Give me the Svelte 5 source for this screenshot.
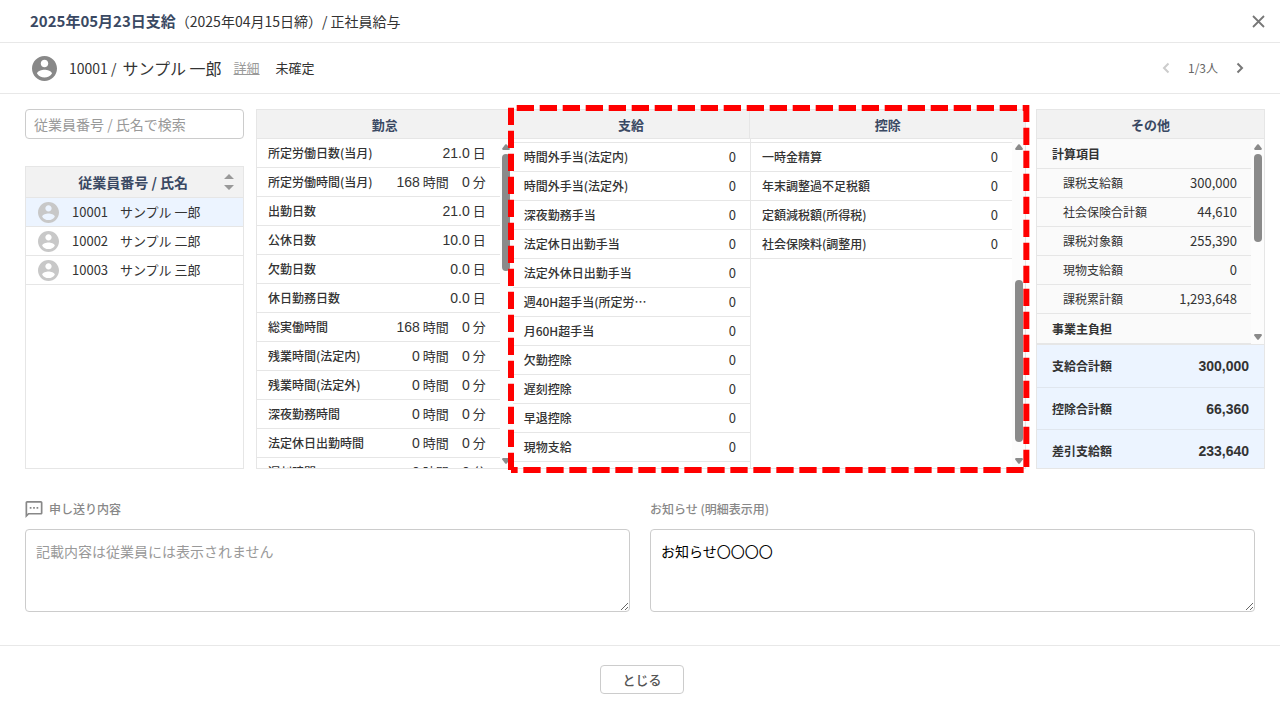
<script lang="ts">
	let keyword = $state('');
	let selected = $state('10001');
	let handover = $state('');
	let notice = $state('お知らせ〇〇〇〇');

	const employees = [
		{ id: '10001', name: 'サンプル 一郎' },
		{ id: '10002', name: 'サンプル 二郎' },
		{ id: '10003', name: 'サンプル 三郎' }
	];

	const attendance = [
		{ label: '所定労働日数(当月)', days: '21.0' },
		{ label: '所定労働時間(当月)', hours: 168, minutes: 0 },
		{ label: '出勤日数', days: '21.0' },
		{ label: '公休日数', days: '10.0' },
		{ label: '欠勤日数', days: '0.0' },
		{ label: '休日勤務日数', days: '0.0' },
		{ label: '総実働時間', hours: 168, minutes: 0 },
		{ label: '残業時間(法定内)', hours: 0, minutes: 0 },
		{ label: '残業時間(法定外)', hours: 0, minutes: 0 },
		{ label: '深夜勤務時間', hours: 0, minutes: 0 },
		{ label: '法定休日出勤時間', hours: 0, minutes: 0 },
		{ label: '遅刻時間', hours: 0, minutes: 0 }
	];

	const payments = [
		'時間外手当(法定内)',
		'時間外手当(法定外)',
		'深夜勤務手当',
		'法定休日出勤手当',
		'法定外休日出勤手当',
		'週40H超手当(所定労…',
		'月60H超手当',
		'欠勤控除',
		'遅刻控除',
		'早退控除',
		'現物支給'
	];

	const deductions = ['一時金精算', '年末調整過不足税額', '定額減税額(所得税)', '社会保険料(調整用)'];

	const calcItems = [
		{ label: '課税支給額', value: 300000 },
		{ label: '社会保険合計額', value: 44610 },
		{ label: '課税対象額', value: 255390 },
		{ label: '現物支給額', value: 0 },
		{ label: '課税累計額', value: 1293648 }
	];

	const totals = [
		{ label: '支給合計額', value: 300000 },
		{ label: '控除合計額', value: 66360 },
		{ label: '差引支給額', value: 233640 }
	];

	const fmt = (n: number) => n.toLocaleString('en-US');
</script>

{#snippet avatar()}
	<svg class="avatar" viewBox="2 2 20 20" aria-hidden="true">
		<path d="M12 2C6.48 2 2 6.48 2 12s4.48 10 10 10 10-4.48 10-10S17.52 2 12 2zm0 3c1.66 0 3 1.34 3 3s-1.34 3-3 3-3-1.34-3-3 1.34-3 3-3zm0 14.2c-2.5 0-4.71-1.28-6-3.22.03-1.99 4-3.08 6-3.08 1.99 0 5.97 1.09 6 3.08-1.29 1.94-3.5 3.22-6 3.22z" />
	</svg>
{/snippet}

{#snippet scrollbar(top: number, size: number)}
	<div class="scrollbar" aria-hidden="true">
		<svg viewBox="0 0 8 6"><path d="M3.2 .6Q4 0 4.8 .6L7.8 4.6Q8 6 7 6H1Q0 6 .2 4.6z" /></svg>
		<div class="track">
			<div class="thumb" style="top: {top}%; height: {size}%"></div>
		</div>
		<svg viewBox="0 0 8 6"><path d="M3.2 5.4Q4 6 4.8 5.4L7.8 1.4Q8 0 7 0H1Q0 0 .2 1.4z" /></svg>
	</div>
{/snippet}

<div class="dialog" lang="ja">
	<header class="title-bar">
		<h1>2025年05月23日支給</h1>
		<span class="subtitle">（2025年04月15日締）/ 正社員給与</span>
		<button class="icon-btn close" aria-label="閉じる">
			<svg viewBox="0 0 13 13"><path d="M1 1l11 11M12 1L1 12" /></svg>
		</button>
	</header>

	<div class="person-bar">
		{@render avatar()}
		<span class="person-id">10001 /</span>
		<span class="person-name">サンプル 一郎</span>
		<a href="#detail">詳細</a>
		<span>未確定</span>
		<nav class="pager">
			<button class="icon-btn" aria-label="前へ" disabled>
				<svg viewBox="0 0 8 12"><path d="M6.5 1.5L2 6l4.500 4.500" /></svg>
			</button>
			<span>1/3人</span>
			<button class="icon-btn" aria-label="次へ">
				<svg viewBox="0 0 8 12"><path d="M1.500 1.500L6 6l-4.500 4.500" /></svg>
			</button>
		</nav>
	</div>

	<main>
		<aside>
			<input type="text" aria-label="従業員検索" placeholder="従業員番号 / 氏名で検索" bind:value={keyword} />
			<div class="employees">
				<table>
					<thead>
						<tr>
							<th colspan="3">
								<div class="sort-head">
									従業員番号 / 氏名
									<svg viewBox="0 0 10 18" aria-hidden="true"><path d="M0 6l5-5 5 5zM0 12h10l-5 5z" /></svg>
								</div>
							</th>
						</tr>
					</thead>
					<tbody>
						{#each employees as emp}
							<tr class:selected={emp.id === selected} onclick={() => (selected = emp.id)}>
								<td class="face">{@render avatar()}</td>
								<td class="id">{emp.id}</td>
								<td>{emp.name}</td>
							</tr>
						{/each}
					</tbody>
				</table>
			</div>
		</aside>

		<div class="ledger">
			<section class="panel attendance">
				<h2>勤怠</h2>
				<div class="body">
					<table>
						<tbody>
							{#each attendance as row}
								<tr>
									<th scope="row">{row.label}</th>
									<td>
										{#if row.days}
											<b>{row.days}</b> 日
										{:else}
											<b>{row.hours}</b> 時間<span class="minutes"><b>{row.minutes}</b> 分</span>
										{/if}
									</td>
								</tr>
							{/each}
						</tbody>
					</table>
					{@render scrollbar(0, 39)}
				</div>
			</section>

			<div class="panel pay">
				<div class="pay-heads">
					<h2 id="pay-head">支給</h2>
					<h2 id="deduct-head">控除</h2>
				</div>
				<div class="body">
					<div class="list payments">
						<table aria-labelledby="pay-head">
							<tbody>
								{#each payments as label}
									<tr><th scope="row">{label}</th><td>0</td></tr>
								{/each}
							</tbody>
						</table>
					</div>
					<div class="list deductions">
						<table aria-labelledby="deduct-head">
							<tbody>
								{#each deductions as label}
									<tr><th scope="row">{label}</th><td>0</td></tr>
								{/each}
							</tbody>
						</table>
					</div>
					{@render scrollbar(42, 54)}
				</div>
				<svg class="marker" aria-hidden="true">
					<line x1="0" y1="100%" x2="0" y2="-3" />
					<line x1="0" y1="0" x2="100%" y2="0" stroke-dashoffset="17.3" />
					<line x1="100%" y1="-3" x2="100%" y2="100%" stroke-dashoffset="0.3" />
					<line x1="100%" y1="100%" x2="0" y2="100%" stroke-dashoffset="20.3" />
				</svg>
			</div>
		</div>

		<section class="panel other">
			<h2>その他</h2>
			<div class="body">
				<table>
					<tbody>
						<tr class="group"><th colspan="2">計算項目</th></tr>
						{#each calcItems as item}
							<tr><th scope="row">{item.label}</th><td>{fmt(item.value)}</td></tr>
						{/each}
						<tr class="group"><th colspan="2">事業主負担</th></tr>
					</tbody>
				</table>
				{@render scrollbar(0, 50)}
			</div>
			<dl class="totals">
				{#each totals as total}
					<div>
						<dt>{total.label}</dt>
						<dd>{fmt(total.value)}</dd>
					</div>
				{/each}
			</dl>
		</section>
	</main>

	<div class="notes">
		<div class="note">
			<label for="handover">
				<svg viewBox="2 2 20 20" aria-hidden="true">
					<path d="M20 2H4c-1.100 0-2 .9-2 2v18l4-4h14c1.100 0 2-.9 2-2V4c0-1.100-.9-2-2-2zm0 14H5.200L4 17.200V4h16v12zM7 9h2v2H7zm4 0h2v2h-2zm4 0h2v2h-2z" />
				</svg>
				申し送り内容
			</label>
			<textarea id="handover" placeholder="記載内容は従業員には表示されません" bind:value={handover}></textarea>
		</div>
		<div class="note">
			<label for="notice">お知らせ (明細表示用)</label>
			<textarea id="notice" bind:value={notice}></textarea>
		</div>
	</div>

	<footer>
		<button class="close-btn">とじる</button>
	</footer>
</div>

<style>
	:global(body) {
		background: #fff;
	}

	.dialog,
	.dialog * {
		box-sizing: border-box;
	}

	.dialog {
		font-family: 'Noto Sans CJK JP', sans-serif;
		font-size: 13px;
		line-height: 20px;
		color: #333;
		overflow: hidden;
	}

	h1,
	h2,
	dl,
	dd {
		margin: 0;
	}

	button,
	input,
	textarea {
		font-family: inherit;
	}

	table {
		width: 100%;
		border-spacing: 0;
	}

	th,
	td {
		height: 29px;
		padding: 0;
		border-bottom: 1px solid #e6e6e6;
		white-space: nowrap;
	}

	.title-bar {
		display: flex;
		align-items: center;
		height: 43px;
		padding: 0 15px 0 30px;
		border-bottom: 1px solid #e8e8e8;
	}

	h1 {
		font-size: 15px;
		font-weight: 700;
		color: #3a4963;
	}

	.subtitle {
		font-size: 14px;
	}

	.icon-btn {
		display: flex;
		padding: 0;
		border: none;
		background: none;
		cursor: pointer;
	}

	.icon-btn svg {
		width: 8px;
		height: 12px;
		fill: none;
		stroke: #777;
		stroke-width: 2;
	}

	.icon-btn:disabled svg {
		stroke: #ccc;
	}

	.close {
		margin-left: auto;
	}

	.close svg {
		width: 13px;
		height: 13px;
		stroke-width: 1.8;
	}

	.person-bar {
		display: flex;
		align-items: center;
		height: 51px;
		padding: 0 36px 0 32px;
		border-bottom: 1px solid #e8e8e8;
	}

	.avatar {
		display: block;
		width: 21px;
		height: 21px;
		fill: #c8c8c8;
	}

	.person-bar .avatar {
		width: 25px;
		height: 25px;
		margin-right: 12px;
		fill: #888;
	}

	.person-name {
		margin-left: 6px;
		font-size: 16px;
	}

	.person-id {
		font-size: 14px;
	}

	.person-bar a {
		margin: 0 16px 0 12px;
		color: #999;
	}

	.pager {
		display: flex;
		align-items: center;
		gap: 18px;
		margin-left: auto;
		font-size: 12px;
		color: #666;
	}

	main {
		display: flex;
		height: 375px;
		padding: 15px 15px 0 25px;
	}

	aside {
		display: flex;
		flex-direction: column;
		width: 219px;
		margin-right: 12px;
	}

	input {
		height: 30px;
		padding: 0 8px;
		border: 1px solid #ccc;
		border-radius: 4px;
		font-size: 14px;
		color: #333;
	}

	input::placeholder,
	textarea::placeholder {
		color: #999;
	}

	.employees {
		flex: 1;
		margin-top: 27px;
		border: 1px solid #e6e6e6;
	}

	.employees thead th {
		height: 31px;
		background: #f2f2f2;
		font-size: 14px;
		color: #3a4963;
	}

	.sort-head {
		display: flex;
		align-items: center;
		justify-content: flex-end;
		gap: 36px;
		padding-right: 9px;
	}

	.sort-head svg {
		width: 10px;
		height: 18px;
		fill: #999;
	}

	.employees tbody tr {
		cursor: pointer;
	}

	.employees .face {
		width: 46px;
		padding-left: 12px;
	}

	.employees .id {
		width: 48px;
	}

	.selected td {
		background: #ecf4ff;
	}

	.ledger {
		display: grid;
		grid-template-columns: 1fr 2fr;
		flex: 1;
		margin-right: 10px;
	}

	.panel {
		display: flex;
		flex-direction: column;
		min-width: 0;
		min-height: 0;
		border: 1px solid #e6e6e6;
	}

	.attendance {
		border-right: none;
	}

	h2 {
		height: 29px;
		border-bottom: 1px solid #e6e6e6;
		background: #f2f2f2;
		font-size: 13px;
		font-weight: 700;
		line-height: 30px;
		text-align: center;
		color: #3a4963;
	}

	.body {
		display: flex;
		align-items: flex-start;
		flex: 1;
		min-height: 0;
		overflow: hidden;
	}

	.panel th {
		padding-left: 11px;
		font-size: 12px;
		font-weight: 500;
		text-align: left;
	}

	.panel td {
		padding-right: 14px;
		text-align: right;
	}

	.attendance b {
		font-family: 'Liberation Sans', sans-serif;
		font-size: 14px;
		font-weight: 400;
	}

	.minutes {
		display: inline-block;
		width: 37px;
	}

	.scrollbar {
		display: flex;
		flex-direction: column;
		align-items: center;
		gap: 4px;
		align-self: stretch;
		flex: 0 0 13px;
		padding: 5px 0 4px;
		background: #fcfcfc;
	}

	.scrollbar svg {
		width: 8px;
		height: 6px;
		flex: none;
		fill: #8a8a8a;
	}

	.track {
		position: relative;
		flex: 1;
		width: 8px;
	}

	.thumb {
		position: absolute;
		width: 100%;
		border-radius: 4px;
		background: #8a8a8a;
	}

	.pay {
		position: relative;
		border-left: none;
	}

	.pay-heads {
		display: grid;
		grid-template-columns: 238fr 275fr;
	}

	.pay-heads h2:first-child {
		border-right: 1px solid #e6e6e6;
	}

	.list {
		align-self: stretch;
		padding-top: 3px;
	}

	.list table {
		border-top: 1px solid #e6e6e6;
	}

	.payments {
		flex: 238;
		border-right: 1px solid #e6e6e6;
	}

	.deductions {
		flex: 262;
	}

	.marker {
		position: absolute;
		top: -2px;
		left: -2px;
		width: calc(100% + 3px);
		height: calc(100% + 4px);
		overflow: visible;
		stroke: #f00;
		stroke-width: 6;
		stroke-dasharray: 17.3 5.7;
		pointer-events: none;
	}

	.other {
		width: 229px;
	}

	.other .body {
		flex: none;
		background: #fafafa;
	}

	.other th {
		padding-left: 26px;
		font-weight: 400;
	}

	.other .group th {
		height: 30px;
		padding-left: 15px;
		font-weight: 700;
	}

	.totals {
		flex: 1;
		min-height: 0;
		overflow: hidden;
		border-top: 1px solid #e6e6e6;
		background: #ecf4ff;
	}

	.totals div {
		display: flex;
		align-items: center;
		justify-content: space-between;
		height: 42px;
		padding: 0 15px;
		font-weight: 700;
	}

	.totals div + div {
		border-top: 1px solid #e0e6ee;
	}

	.totals dt {
		font-size: 12px;
	}

	.totals dd {
		font-family: 'Liberation Sans', sans-serif;
		font-size: 14px;
	}

	.notes {
		display: grid;
		grid-template-columns: 1fr 1fr;
		gap: 20px;
		padding: 30px 25px 33px;
	}

	.note {
		display: flex;
		flex-direction: column;
		gap: 10px;
	}

	label {
		display: flex;
		align-items: center;
		gap: 6px;
		font-size: 12px;
		font-weight: 500;
		color: #888;
	}

	label svg {
		width: 18px;
		height: 17px;
		fill: #888;
	}

	textarea {
		display: block;
		width: 100%;
		height: 83px;
		padding: 10px;
		border: 1px solid #ccc;
		border-radius: 4px;
		font-size: 14px;
		line-height: 22px;
		color: #000;
	}

	footer {
		display: flex;
		justify-content: center;
		padding: 19px 0 14px 4px;
		border-top: 1px solid #e8e8e8;
	}

	.close-btn {
		width: 84px;
		height: 29px;
		padding: 0;
		border: 1px solid #ccc;
		border-radius: 4px;
		background: #fff;
		font-size: 13px;
		font-weight: 500;
		color: #555;
		cursor: pointer;
	}
</style>
